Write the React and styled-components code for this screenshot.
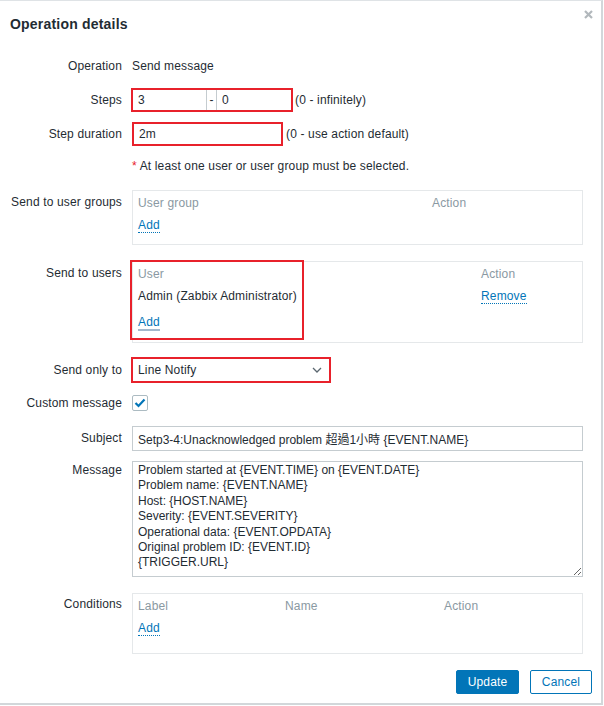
import styled, { createGlobalStyle } from "styled-components";

const GlobalStyle = createGlobalStyle`
  body {
    margin: 0;
    background: #fff;
    font-family: "Liberation Sans", Arial, "Noto Sans CJK TC", sans-serif;
    font-size: 12px;
    letter-spacing: 0.15px;
    color: #1f2c33;
  }
`;

const RED = "#e8212b";

const App = () => {
  return (
    <>
      <GlobalStyle />
      <Dialog>
        <Header>
          <Title>Operation details</Title>
          <CloseButton aria-label="Close">
            <svg width="9" height="9" viewBox="0 0 9 9">
              <path d="M1 1 L8 8 M8 1 L1 8" stroke="#b2b8bc" strokeWidth="2.2" />
            </svg>
          </CloseButton>
        </Header>

        <Body>
          <Row>
            <Label>Operation</Label>
            <Value>Send message</Value>
          </Row>

          <Row>
            <Label>Steps</Label>
            <Inline>
              <StepsGroup>
                <StepInput defaultValue="3" readOnly />
                <Dash>-</Dash>
                <StepInput defaultValue="0" readOnly />
              </StepsGroup>
              <Hint $ml={2}>(0 - infinitely)</Hint>
            </Inline>
          </Row>

          <Row>
            <Label>Step duration</Label>
            <Inline>
              <DurationInput defaultValue="2m" readOnly />
              <Hint $ml={3}>(0 - use action default)</Hint>
            </Inline>
          </Row>

          <Row>
            <span />
            <Note>
              <Asterisk>*</Asterisk> At least one user or user group must be selected.
            </Note>
          </Row>

          <Row>
            <Label>Send to user groups</Label>
            <TableBox $pb={6}>
              <GridRow $cols="294px 1fr" $head>
                <span>User group</span>
                <span>Action</span>
              </GridRow>
              <GridRow $cols="1fr">
                <span>
                  <LinkText>Add</LinkText>
                </span>
              </GridRow>
            </TableBox>
          </Row>

          <Row>
            <Label>Send to users</Label>
            <TableBox $pb={7}>
              <GridRow $cols="343px 1fr" $head>
                <span>User</span>
                <span>Action</span>
              </GridRow>
              <GridRow $cols="343px 1fr">
                <span>Admin (Zabbix Administrator)</span>
                <span>
                  <LinkText>Remove</LinkText>
                </span>
              </GridRow>
              <GridRow $cols="1fr">
                <span>
                  <LinkText $focus>Add</LinkText>
                </span>
              </GridRow>
              <Highlight />
            </TableBox>
          </Row>

          <Row $mt={-1}>
            <Label>Send only to</Label>
            <SelectBox>
              <span>Line Notify</span>
              <svg width="10" height="6" viewBox="0 0 10 6">
                <path d="M1 1 L5 5 L9 1" fill="none" stroke="#5b6770" strokeWidth="1.3" />
              </svg>
            </SelectBox>
          </Row>

          <Row $h={25} $mt={-1}>
            <Label>Custom message</Label>
            <Checkbox>
              <svg width="12" height="10" viewBox="0 0 12 10">
                <path d="M1.5 5 L4.5 8 L10.5 1.5" fill="none" stroke="#0275b8" strokeWidth="2.2" />
              </svg>
            </Checkbox>
          </Row>

          <Row>
            <Label>Subject</Label>
            <TextInput
              defaultValue="Setp3-4:Unacknowledged problem 超過1小時 {EVENT.NAME}"
              readOnly
            />
          </Row>

          <Row>
            <Label $shift={-3}>Message</Label>
            <MessageArea
              readOnly
              defaultValue={`Problem started at {EVENT.TIME} on {EVENT.DATE}
Problem name: {EVENT.NAME}
Host: {HOST.NAME}
Severity: {EVENT.SEVERITY}
Operational data: {EVENT.OPDATA}
Original problem ID: {EVENT.ID}
{TRIGGER.URL}`}
            />
          </Row>

          <Row>
            <Label $shift={-1}>Conditions</Label>
            <TableBox $pb={12}>
              <GridRow $cols="147px 159px 1fr" $head>
                <span>Label</span>
                <span>Name</span>
                <span>Action</span>
              </GridRow>
              <GridRow $cols="1fr">
                <span>
                  <LinkText>Add</LinkText>
                </span>
              </GridRow>
            </TableBox>
          </Row>
        </Body>

        <Footer>
          <PrimaryButton>Update</PrimaryButton>
          <SecondaryButton>Cancel</SecondaryButton>
        </Footer>
      </Dialog>
    </>
  );
};

export default App;

const Dialog = styled.div`
  width: 601px;
  background: #fff;
  border-top: 1px solid #dfe3e6;
  border-right: 2px solid #d2d7da;
  border-bottom: 2px solid #d2d7da;
`;

const Header = styled.div`
  height: 44px;
  box-sizing: border-box;
  padding: 2px 8px 0 10px;
  display: flex;
  align-items: center;
  justify-content: space-between;
`;

const Title = styled.h4`
  margin: 0;
  font-size: 14px;
  font-weight: bold;
  letter-spacing: 0.2px;
  color: #1f2c33;
`;

const CloseButton = styled.span`
  align-self: flex-start;
  margin-top: 7px;
  display: flex;
`;

const Body = styled.div`
  display: flex;
  flex-direction: column;
  gap: 10px;
  padding: 9px 18px 0 10px;
`;

const Row = styled.div`
  display: grid;
  grid-template-columns: 112px 1fr;
  column-gap: 10px;
  align-items: start;
  min-height: ${({ $h }) => ($h ? `${$h}px` : "24px")};
  margin-top: ${({ $mt }) => ($mt ? `${$mt}px` : "0")};
`;

const Label = styled.div`
  text-align: right;
  line-height: 24px;
  white-space: nowrap;
  margin-top: ${({ $shift }) => ($shift ? `${$shift}px` : "0")};
`;

const Value = styled.div`
  line-height: 24px;
`;

const Inline = styled.div`
  display: flex;
  align-items: center;
  height: 24px;
`;

const Hint = styled.span`
  margin-left: ${({ $ml }) => $ml}px;
`;

const StepsGroup = styled.div`
  display: flex;
  height: 24px;
  width: 162px;
  margin-left: -1px;
  box-sizing: border-box;
  border: 2px solid ${RED};
`;

const StepInput = styled.input`
  width: 73px;
  flex: none;
  box-sizing: border-box;
  border: none;
  outline: none;
  padding: 0 5px;
  font: inherit;
  color: #1f2c33;
  background: #fff;
`;

const Dash = styled.span`
  width: 9px;
  border-left: 1px solid #c5ccd0;
  border-right: 1px solid #c5ccd0;
  display: flex;
  align-items: center;
  justify-content: center;
  color: #1f2c33;
`;

const DurationInput = styled.input`
  width: 151px;
  height: 24px;
  box-sizing: border-box;
  border: 2px solid ${RED};
  outline: none;
  padding: 0 5px;
  font: inherit;
  color: #1f2c33;
`;

const Note = styled.div`
  line-height: 20px;
  padding-bottom: 4px;
`;

const Asterisk = styled.span`
  color: ${RED};
`;

const TableBox = styled.div`
  position: relative;
  border: 1px solid #e5e8ea;
  padding: 3px 5px ${({ $pb }) => $pb}px;
  margin-bottom: 6px;
`;

const GridRow = styled.div`
  display: grid;
  grid-template-columns: ${({ $cols }) => $cols};
  align-items: center;
  height: ${({ $head }) => ($head ? "18px" : "26px")};
  color: ${({ $head }) => ($head ? "#8a99a2" : "#1f2c33")};
`;

const LinkText = styled.a`
  color: #0275b8;
  text-decoration: none;
  border-bottom: ${({ $focus }) =>
    $focus ? "2px solid #a3b8cc" : "1px dotted #0275b8"};
  cursor: pointer;
`;

const Highlight = styled.div`
  position: absolute;
  left: -3px;
  top: -2px;
  width: 174px;
  height: 80px;
  box-sizing: border-box;
  border: 2px solid ${RED};
  pointer-events: none;
`;

const SelectBox = styled.div`
  width: 198px;
  height: 24px;
  box-sizing: border-box;
  border: 1px solid #c5ccd0;
  outline: 2px solid ${RED};
  outline-offset: -1px;
  display: flex;
  align-items: center;
  justify-content: space-between;
  padding: 0 7px 0 5px;
`;

const Checkbox = styled.span`
  margin-top: 4px;
  width: 16px;
  height: 16px;
  box-sizing: border-box;
  border: 1px solid #acbbc2;
  border-radius: 2px;
  display: flex;
  align-items: center;
  justify-content: center;
`;

const TextInput = styled.input`
  height: 25px;
  box-sizing: border-box;
  border: 1px solid #c5ccd0;
  outline: none;
  padding: 0 5px;
  font: inherit;
  color: #1f2c33;
`;

const MessageArea = styled.textarea`
  height: 116px;
  box-sizing: border-box;
  border: 1px solid #c5ccd0;
  outline: none;
  padding: 1px 5px;
  font: inherit;
  line-height: 15.4px;
  color: #1f2c33;
  margin-bottom: 6px;
`;

const Footer = styled.div`
  display: flex;
  justify-content: flex-end;
  gap: 11px;
  padding: 10px 9px 9px 0;
`;

const PrimaryButton = styled.button`
  height: 24px;
  width: 63px;
  font: inherit;
  letter-spacing: inherit;
  border: 1px solid #0275b8;
  background: #0275b8;
  color: #fff;
  border-radius: 2px;
  cursor: pointer;
`;

const SecondaryButton = styled(PrimaryButton)`
  width: 62px;
  background: #fff;
  color: #0275b8;
`;
